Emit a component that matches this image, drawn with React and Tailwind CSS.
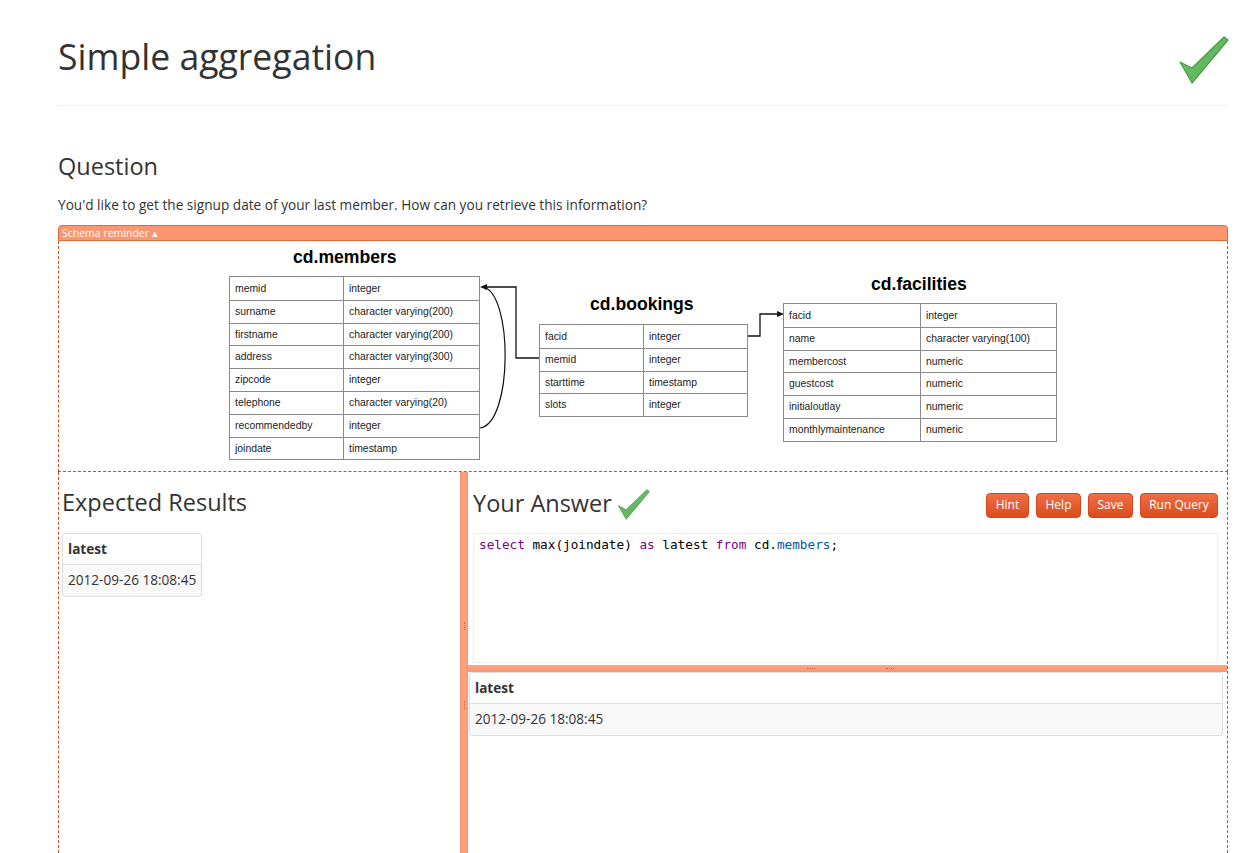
import React from 'react'

function Check({ className }) {
  return (
    <svg className={className} viewBox="0 0 52 48" fill="none">
      <path d="M2 26 L14 32 L46 1 L50 4 L14 47 Z" fill="#62b95f" stroke="#4a9c47" strokeWidth="1.2" strokeLinejoin="round" />
    </svg>
  )
}

function SchemaTable({ rows, col, className }) {
  return (
    <div className={'absolute border border-[#8a8a8a] bg-white ' + className}>
      {rows.map(([name, type], i) => (
        <div key={name} className={'flex h-[22.8px] items-center ' + (i > 0 ? 'border-t border-[#8a8a8a]' : '')}>
          <div className={'h-full flex items-center pl-[5px] border-r border-[#8a8a8a] ' + col}>{name}</div>
          <div className="pl-[5px]">{type}</div>
        </div>
      ))}
    </div>
  )
}

function Diagram() {
  return (
    <div className="relative mx-auto w-[828px] h-[222px] font-['Liberation_Sans',Arial,sans-serif] text-[10.4px] text-[#222]">
      <div className="absolute left-[64px] top-[2px] leading-[20px] text-[17.6px] font-bold text-black">cd.members</div>
      <div className="absolute left-[361px] top-[49px] leading-[20px] text-[17.6px] font-bold text-black">cd.bookings</div>
      <div className="absolute left-[642px] top-[29px] leading-[20px] text-[17.6px] font-bold text-black">cd.facilities</div>

      <SchemaTable
        className="left-0 top-[31px] w-[251px]"
        col="w-[114px]"
        rows={[
          ['memid', 'integer'],
          ['surname', 'character varying(200)'],
          ['firstname', 'character varying(200)'],
          ['address', 'character varying(300)'],
          ['zipcode', 'integer'],
          ['telephone', 'character varying(20)'],
          ['recommendedby', 'integer'],
          ['joindate', 'timestamp'],
        ]}
      />
      <SchemaTable
        className="left-[310px] top-[79px] w-[209px]"
        col="w-[104px]"
        rows={[
          ['facid', 'integer'],
          ['memid', 'integer'],
          ['starttime', 'timestamp'],
          ['slots', 'integer'],
        ]}
      />
      <SchemaTable
        className="left-[554px] top-[58px] w-[274px]"
        col="w-[137px]"
        rows={[
          ['facid', 'integer'],
          ['name', 'character varying(100)'],
          ['membercost', 'numeric'],
          ['guestcost', 'numeric'],
          ['initialoutlay', 'numeric'],
          ['monthlymaintenance', 'numeric'],
        ]}
      />

      <svg className="absolute inset-0" width="828" height="222" viewBox="0 0 828 222" fill="none">
        <path d="M256 42 H287 V113 H310" stroke="#111" strokeWidth="1.3" />
        <path d="M251 42 L258 39 L258 45 Z" fill="#111" />
        <path d="M251 183 C284 178 284 48 254 42" stroke="#111" strokeWidth="1.2" />
        <path d="M519 91 H531 V69 H549" stroke="#111" strokeWidth="1.3" />
        <path d="M555 69 L548 66 L548 72 Z" fill="#111" />
      </svg>
    </div>
  )
}

function ResultTable({ className }) {
  return (
    <div className={'border border-[#ddd] rounded-[3px] text-[13.6px] whitespace-nowrap ' + className}>
      <div className="h-[31px] flex items-center px-[5px] font-bold border-b border-[#ddd] bg-white rounded-t-[3px]">latest</div>
      <div className="h-[31px] flex items-center px-[5px] bg-[#f9f9f9] rounded-b-[3px]">2012-09-26 18:08:45</div>
    </div>
  )
}

function Btn({ children, className }) {
  return (
    <button className={'h-[25px] rounded-[4px] border border-[#d2471a] bg-gradient-to-b from-[#ef6e45] to-[#dc4b1c] text-white text-[12px] ' + className}>
      {children}
    </button>
  )
}

export default function App() {
  return (
    <div className="h-[853px] overflow-hidden bg-white text-[#333] font-['Open_Sans',sans-serif]">
      <div className="ml-[58px] w-[1170px]">
        {/* header */}
        <div className="h-[106px] flex justify-between items-start border-b border-[#eee]">
          <h1 className="mt-[36px] text-[35.6px] leading-[40px]">Simple aggregation</h1>
          <Check className="mt-[36px] mr-[-2px] w-[52px] h-[48px]" />
        </div>

        <h2 className="mt-[46px] text-[23.5px] leading-[28px]">Question</h2>
        <p className="mt-[15px] text-[13.65px] leading-[20px]">You'd like to get the signup date of your last member. How can you retrieve this information?</p>

        {/* schema */}
        <div className="mt-[10px] h-[16px] bg-[#fc9670] border border-[#e4683e] rounded-t-[4px] px-[3px] text-white text-[10.5px] leading-[14px]">
          Schema reminder ▴
        </div>
        <div className="h-[231px] border-x border-b border-dashed border-[#d24a1f] pt-[4px]">
          <Diagram />
        </div>

        {/* work area */}
        <div className="flex h-[381px] border-r border-dashed border-[#d24a1f]">
          <div className="w-[402px] border-l border-dashed border-[#d24a1f] px-[3px]">
            <h3 className="mt-[16px] text-[23.5px] leading-[28px]">Expected Results</h3>
            <ResultTable className="mt-[17px] w-fit" />
          </div>

          <div className="w-[8px] bg-gradient-to-r from-[#fe9470] via-[#ffa582] to-[#fe9470] flex flex-col items-center">
            <div className="mt-[150px] w-[1px] h-[8px] border-l border-dotted border-[#c8643f]" />
            <div className="mt-[71px] w-[1px] h-[8px] border-l border-dotted border-[#c8643f]" />
          </div>

          <div className="flex-1 flex flex-col">
            <div className="px-[5px] pr-[9px]">
              <div className="mt-[15px] flex items-center justify-between h-[34px]">
                <div className="flex items-center">
                  <h3 className="text-[23.5px] leading-[28px] -mt-[3px]">Your Answer</h3>
                  <Check className="ml-[5px] w-[34px] h-[31px]" />
                </div>
                <div className="flex gap-[7px] mt-[2px]">
                  <Btn className="w-[43px]">Hint</Btn>
                  <Btn className="w-[45px]">Help</Btn>
                  <Btn className="w-[45px]">Save</Btn>
                  <Btn className="w-[78px]">Run Query</Btn>
                </div>
              </div>
              <div className="mt-[12px] h-[130px] border border-[#eee] px-[5px] pt-[3px] font-['DejaVu_Sans_Mono',monospace] text-[12.7px] leading-[16px] text-black">
                <span className="text-[#770088]">select</span> max(joindate) <span className="text-[#770088]">as</span> latest <span className="text-[#770088]">from</span> cd.<span className="text-[#0055aa]">members</span>;
              </div>
            </div>
            <div className="mt-[2px] h-[7px] bg-gradient-to-b from-[#ffa582] to-[#fe9470] flex items-center">
              <div className="ml-[339px] w-[8px] h-[1px] border-t border-dotted border-[#c8643f]" />
              <div className="ml-[71px] w-[8px] h-[1px] border-t border-dotted border-[#c8643f]" />
            </div>
            <ResultTable className="ml-[1px] mr-[4px]" />
          </div>
        </div>
      </div>
    </div>
  )
}
